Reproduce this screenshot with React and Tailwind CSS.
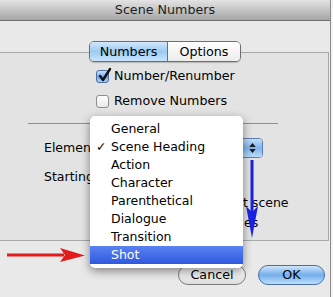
import React from "react";

const font = { fontFamily: '"DejaVu Sans", "Noto Sans", sans-serif' };

function CheckBox({ checked }) {
  if (checked) {
    return (
      <span className="relative w-[13px] h-[13px] rounded-[3px] border border-[#4a6fa5] bg-gradient-to-b from-[#cfe4fb] via-[#6fa8ea] to-[#a9d0f7] shrink-0">
        <svg viewBox="0 0 14 14" className="absolute left-[1px] top-[-3px] w-[14px] h-[14px] overflow-visible">
          <path d="M2 8 L5 12 L12 1" fill="none" stroke="#111" strokeWidth="2.4" strokeLinecap="round" strokeLinejoin="round" />
        </svg>
      </span>
    );
  }
  return (
    <span className="w-[13px] h-[13px] rounded-[3px] border border-[#8e8e8e] bg-gradient-to-b from-white to-[#e9e9e9] shrink-0" />
  );
}

const items = ["General", "Scene Heading", "Action", "Character", "Parenthetical", "Dialogue", "Transition", "Shot"];

export default function App() {
  return (
    <div className="relative w-[333px] h-[297px] overflow-hidden bg-[#f4f4f4] text-[12.5px] text-black" style={font}>
      <div className="w-[331px] h-full flex flex-col bg-[#e9e9e9] border-r border-[#8a8a8a]">
        {/* Title bar */}
        <div className="h-[21px] shrink-0 flex items-center justify-center bg-gradient-to-b from-[#e4e4e4] to-[#a6a6a6] border-b border-[#6e6e6e] text-[12.7px] text-[#1e1e1e]">
          Scene Numbers
        </div>

        {/* Tabs */}
        <div className="relative z-10 mt-[20px] pl-[89px] flex">
          <div className="flex h-[21px] rounded-[5px] border border-[#6f6f6f] overflow-hidden shadow-[0_1px_1px_rgba(0,0,0,0.2)]">
            <div className="w-[78px] flex items-center justify-center bg-gradient-to-b from-[#d3e7fb] via-[#9ccaf3] to-[#c9e4fd] border-r border-[#6f6f6f] text-[12.7px]">
              Numbers
            </div>
            <div className="w-[72px] flex items-center justify-center bg-gradient-to-b from-white to-[#ececec] text-[12.7px]">
              Options
            </div>
          </div>
        </div>

        {/* Group box */}
        <div className="mt-[-10px] w-[329px] h-[189px] shrink-0 flex flex-col bg-[#e3e3e3] border-t border-r border-b border-[#a9a9a9]">
          <div className="mt-[14px] h-[18px] pl-[96px] flex items-center gap-[5px] text-[12.7px]">
            <CheckBox checked />
            <span>Number/Renumber</span>
          </div>
          <div className="mt-[7px] h-[18px] pl-[96px] flex items-center gap-[5px] text-[12.7px]">
            <CheckBox />
            <span>Remove Numbers</span>
          </div>
          <div className="mt-[13px] ml-[28px] w-[250px] h-px bg-[#8f8f8f]" />
          <div className="mt-[14px] h-[20px] pl-[44px] flex items-center">
            <span className="w-[46px] overflow-hidden whitespace-nowrap">Elements:</span>
            <div className="ml-auto mr-[65px] w-[123px] h-[20px] flex rounded-[4px] border border-[#5d7fae] overflow-hidden bg-white">
              <div className="flex-1" />
              <div className="w-[20px] flex flex-col items-center justify-center gap-[2px] bg-gradient-to-b from-[#c4def8] via-[#7fb4ec] to-[#b9dbfb] border-l border-[#5d7fae]">
                <svg viewBox="0 0 8 5" className="w-[7px] h-[4px]"><path d="M0 5 L4 0 L8 5 Z" fill="#1b1b1b" /></svg>
                <svg viewBox="0 0 8 5" className="w-[7px] h-[4px]"><path d="M0 0 L4 5 L8 0 Z" fill="#1b1b1b" /></svg>
              </div>
            </div>
          </div>
          <div className="mt-[8px] h-[22px] pl-[44px] flex items-center">
            <span className="w-[46px] overflow-hidden whitespace-nowrap">Starting Number:</span>
          </div>
          <div className="mt-[7px] h-[16px] pl-[242px] flex items-center">
            <span className="pl-[1px]">t scene</span>
          </div>
          <div className="mt-[4px] h-[16px] pl-[244px] flex items-center">
            <span>es</span>
          </div>
        </div>

        {/* Buttons */}
        <div className="mt-[24px] flex pl-[178px] gap-[12px]">
          <div className="w-[68px] h-[20px] rounded-full border border-[#7c7c7c] bg-gradient-to-b from-white via-[#f0f0f0] to-[#dcdcdc] flex items-center justify-center text-[12.7px]">
            Cancel
          </div>
          <div className="w-[67px] h-[20px] rounded-full border border-[#4b6ea3] bg-gradient-to-b from-[#cfe5fb] via-[#74aeeb] to-[#bde0fd] flex items-center justify-center text-[12.7px]">
            OK
          </div>
        </div>
      </div>

      {/* Popup menu */}
      <div className="absolute left-[90px] top-[116px] w-[153px] pt-[4px] pb-[4px] rounded-[5px] bg-white shadow-[0_3px_10px_rgba(0,0,0,0.45)]">
        {items.map((it) => (
          <div
            key={it}
            className={
              it === "Shot"
                ? "h-[18px] flex items-center bg-gradient-to-b from-[#5a82f2] to-[#2f58df] text-white"
                : "h-[18px] flex items-center"
            }
          >
            <span className="w-[21px] pl-[6px]">{it === "Scene Heading" ? "✓" : ""}</span>
            <span>{it}</span>
          </div>
        ))}
      </div>

      {/* Annotation arrows */}
      <svg className="absolute left-0 top-0 w-[333px] h-[297px] pointer-events-none" viewBox="0 0 333 297">
        <line x1="7" y1="255" x2="64" y2="255" stroke="#e41b1b" strokeWidth="3" />
        <path d="M60 248 L85 255.5 L60 262 L65 255 Z" fill="#e41b1b" />
        <line x1="252" y1="160" x2="252" y2="212" stroke="#1a22e0" strokeWidth="3" />
        <path d="M246 206 L252 238 L258 206 L252 212 Z" fill="#1a22e0" />
      </svg>
    </div>
  );
}
